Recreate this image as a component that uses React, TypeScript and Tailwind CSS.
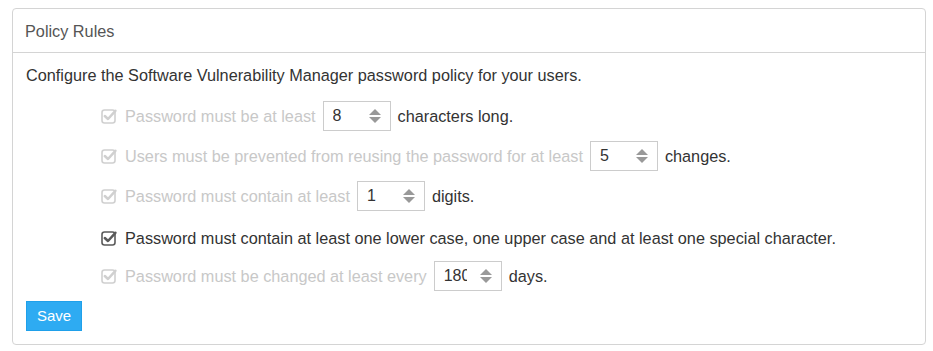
import { FC } from "react";

const CheckIcon: FC<{ disabled?: boolean }> = ({ disabled }) => (
  <svg
    width="17"
    height="16"
    viewBox="0 0 17 16"
    className={disabled ? "text-[#d0d0d0]" : "text-[#5a5a5a]"}
  >
    <rect
      x="1"
      y="2"
      width="13"
      height="13"
      rx="2.5"
      fill="none"
      stroke="currentColor"
      strokeWidth="1.6"
    />
    <path
      d="M3.8 8 L7 11 L14.4 2.8"
      fill="none"
      stroke="currentColor"
      strokeWidth="2.5"
      strokeLinecap="round"
      strokeLinejoin="round"
    />
  </svg>
);

const NumberBox: FC<{ value: string }> = ({ value }) => (
  <div className="mx-[7px] flex h-[30px] w-[68px] items-center border border-[#ccc] bg-white pl-[9px] pr-[9px]">
    <span className="w-[23px] overflow-hidden whitespace-nowrap text-[16px] text-[#333]">
      {value}
    </span>
    <span className="ml-auto flex flex-col items-center gap-[2px]">
      <span className="h-0 w-0 border-x-[6px] border-b-[6px] border-x-transparent border-b-[#999]" />
      <span className="h-0 w-0 border-x-[6px] border-t-[6px] border-x-transparent border-t-[#999]" />
    </span>
  </div>
);

const Rule: FC<{
  before: string;
  value?: string;
  after?: string;
  disabled?: boolean;
  className?: string;
}> = ({ before, value, after, disabled, className }) => (
  <div className={`flex items-center pl-[75px] ${className ?? ""}`}>
    <span className="mr-[7px] flex">
      <CheckIcon disabled={disabled} />
    </span>
    <span className={disabled ? "text-[#c8c8c8]" : "text-[#333]"}>{before}</span>
    {value && <NumberBox value={value} />}
    {after && <span className="text-[#333]">{after}</span>}
  </div>
);

export default function App() {
  return (
    <div
      className="bg-white pb-[6px] pl-[12px] pr-[7px] pt-[8px] text-[16.25px]"
      style={{ fontFamily: '"Liberation Sans", Arial, sans-serif' }}
    >
      <div className="rounded-[4px] border border-[#d4d4d4]">
        <div className="flex h-[44px] items-center border-b border-[#d4d4d4] px-[12px] pt-[2px] text-[#555]">
          Policy Rules
        </div>
        <div className="px-[13px] pb-[13px] pt-[13px]">
          <p className="leading-[18px] text-[#333]">
            Configure the Software Vulnerability Manager password policy for your users.
          </p>
          <div className="mt-[17px] flex flex-col">
            <Rule disabled before="Password must be at least" value="8" after="characters long." />
            <Rule
              disabled
              className="mt-[10px]"
              before="Users must be prevented from reusing the password for at least"
              value="5"
              after="changes."
            />
            <Rule
              disabled
              className="mt-[10px]"
              before="Password must contain at least"
              value="1"
              after="digits."
            />
            <Rule
              className="mt-[17px] h-[20px]"
              before="Password must contain at least one lower case, one upper case and at least one special character."
            />
            <Rule
              disabled
              className="mt-[13px]"
              before="Password must be changed at least every"
              value="180"
              after="days."
            />
          </div>
          <button className="mt-[10px] h-[30px] w-[56px] border border-[#1fa0ea] bg-[#2eabf2] text-[15px] text-white">
            Save
          </button>
        </div>
      </div>
    </div>
  );
}
